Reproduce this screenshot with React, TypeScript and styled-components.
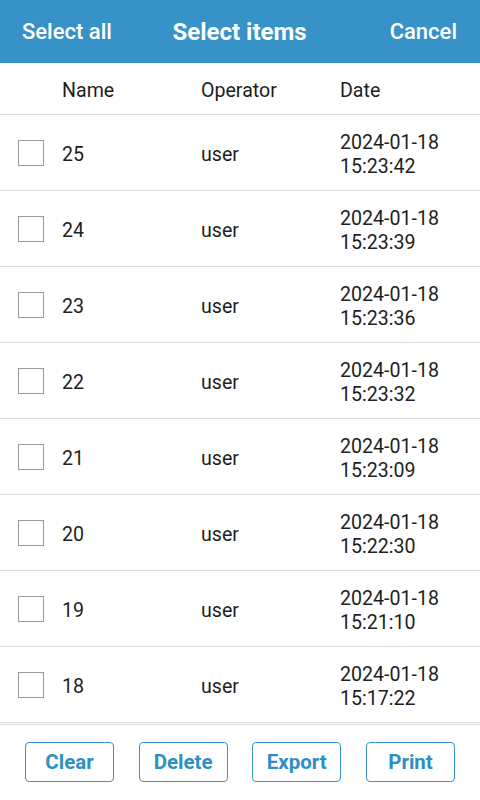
import React, { useState } from 'react';
import styled, { createGlobalStyle } from 'styled-components';

const GlobalStyle = createGlobalStyle`
  html, body { margin: 0; padding: 0; background: #fff; }
  body { font-family: Roboto, "Liberation Sans", sans-serif; }
  * { box-sizing: border-box; }
`

const Page = styled.div`
  width: 480px;
  height: 800px;
  display: flex;
  flex-direction: column;
  overflow: hidden;
  background: #fff;
`
const TopBar = styled.header`
  height: 63px;
  background: #3792c8;
  color: #fff;
  display: flex;
  align-items: center;
  justify-content: space-between;
  padding: 0 23px 0 22px;
  flex-shrink: 0;
`
const BarLink = styled.span`
  font-size: 22px;
  font-weight: 500;
  width: 110px;
  &:last-child { text-align: right; }
`
const Title = styled.h1`
  margin: 0;
  font-size: 24px;
  font-weight: 700;
`
const Grid = styled.div`
  display: grid;
  grid-template-columns: 62px 139px 139px 1fr;
  align-items: center;
  color: #1e1e1e;
  font-size: 19.6px;
`
const Cell = styled.span`
  padding-top: 4px;
`
const HeadRow = styled(Grid)`
  height: 52px;
  border-bottom: 1px solid #dcdcdc;
  flex-shrink: 0;
`
const List = styled.div`
  height: 609px;
  overflow: hidden;
  flex-shrink: 0;
`
const Row = styled(Grid)`
  height: 76px;
  border-bottom: 1px solid #dcdcdc;
  line-height: 24px;
`
const Check = styled.span<{ $on: boolean }>`
  width: 26px;
  height: 26px;
  margin-left: 18px;
  border: 1px solid #9a9a9a;
  background: ${p => (p.$on ? '#3792c8' : '#fff')};
`
const Footer = styled.div`
  flex: 1;
  border-top: 1px solid #dcdcdc;
  display: flex;
  justify-content: space-between;
  padding: 17px 25px 0 25px;
`
const ActionButton = styled.button`
  width: 89px;
  height: 40px;
  border: 1px solid #3a95c8;
  border-radius: 4px;
  background: #fff;
  color: #2e8fc4;
  font-family: Roboto, "Liberation Sans", sans-serif;
  font-size: 20.5px;
  font-weight: 700;
  padding: 0;
`

const items = [
  { name: '25', time: '15:23:42' },
  { name: '24', time: '15:23:39' },
  { name: '23', time: '15:23:36' },
  { name: '22', time: '15:23:32' },
  { name: '21', time: '15:23:09' },
  { name: '20', time: '15:22:30' },
  { name: '19', time: '15:21:10' },
  { name: '18', time: '15:17:22' },
]

export default function App() {
  const [picked, setPicked] = useState<string[]>([])
  const toggle = (n: string) =>
    setPicked(p => (p.includes(n) ? p.filter(x => x !== n) : [...p, n]))
  return (
    <Page>
      <GlobalStyle />
      <TopBar>
        <BarLink onClick={() => setPicked(items.map(i => i.name))}>Select all</BarLink>
        <Title>Select items</Title>
        <BarLink onClick={() => setPicked([])}>Cancel</BarLink>
      </TopBar>
      <HeadRow>
        <span />
        <Cell>Name</Cell>
        <Cell>Operator</Cell>
        <Cell>Date</Cell>
      </HeadRow>
      <List>
        {items.map(item =>
          <Row key={item.name} onClick={() => toggle(item.name)}>
            <Check $on={picked.includes(item.name)} />
            <Cell>{item.name}</Cell>
            <Cell>user</Cell>
            <Cell>2024-01-18<br />{item.time}</Cell>
          </Row>
        )}
      </List>
      <Footer>
        <ActionButton onClick={() => setPicked([])}>Clear</ActionButton>
        <ActionButton>Delete</ActionButton>
        <ActionButton>Export</ActionButton>
        <ActionButton>Print</ActionButton>
      </Footer>
    </Page>
  );
}
